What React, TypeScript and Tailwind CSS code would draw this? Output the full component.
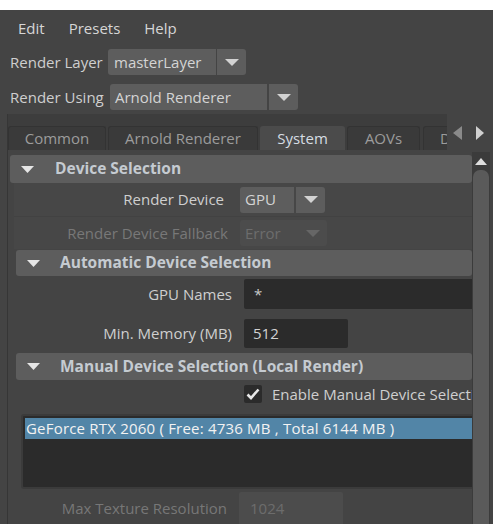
import React from "react";

const Down = ({ w = 14, h = 7, color = "#d2d2d2" }: { w?: number; h?: number; color?: string }) => (
  <svg width={w} height={h} viewBox={`0 0 ${w} ${h}`}>
    <path d={`M0 0 H${w} L${w / 2} ${h} Z`} fill={color} />
  </svg>
);

const Header = ({ title, h, tri, gap }: { title: string; h: string; tri: string; gap: string }) => (
  <div className={`${h} bg-[#5d5d5d] rounded-[3px] flex items-center`}>
    <div className={tri}>
      <Down w={13} h={7} color="#e6e6e6" />
    </div>
    <span className={`${gap} font-bold text-[15.5px] text-[#c5cbd1] whitespace-nowrap`}>{title}</span>
  </div>
);

export default function App() {
  return (
    <div className="w-[493px] h-[524px] overflow-hidden bg-[#444444] text-[#cfcfcf] text-[15px] leading-none flex flex-col font-['Open_Sans',sans-serif]">
      <div className="h-[10px] bg-white shrink-0" />
      {/* menu */}
      <div className="h-[36px] shrink-0 flex items-center pl-[18px] gap-[24px] text-[#d6d6d6]">
        <span>Edit</span>
        <span>Presets</span>
        <span>Help</span>
      </div>
      {/* Render Layer */}
      <div className="mt-[3px] h-[26px] shrink-0 flex items-center pl-[10px]">
        <span className="w-[98px] whitespace-nowrap">Render Layer</span>
        <div className="h-full w-[108px] bg-[#5d5d5d] rounded-l-[3px] flex items-center pl-[6px] text-[#d4d4d4]">masterLayer</div>
        <div className="h-full w-[29px] ml-[1px] bg-[#5d5d5d] rounded-r-[3px] flex items-center justify-center">
          <Down />
        </div>
      </div>
      {/* Render Using */}
      <div className="mt-[9px] h-[26px] shrink-0 flex items-center pl-[10px]">
        <span className="w-[100px] whitespace-nowrap">Render Using</span>
        <div className="h-full w-[157px] bg-[#5d5d5d] rounded-l-[3px] flex items-center pl-[5px] text-[#d4d4d4]">Arnold Renderer</div>
        <div className="h-full w-[29px] ml-[2px] bg-[#5d5d5d] rounded-r-[3px] flex items-center justify-center">
          <Down />
        </div>
      </div>
      {/* Tab widget */}
      <div className="mt-[4px] flex-1 min-h-0 ml-[7px] border-l border-[#363636] flex flex-col">
        <div className="h-[36px] shrink-0 flex">
          <div className="w-[439px] bg-[#3d3d3d] flex items-end overflow-hidden">
            <div className="w-[98px] h-[24px] shrink-0 bg-[#3a3a3a] border border-b-0 border-[#333333] rounded-t-[3px] flex items-center justify-center text-[#9c9c9c]">Common</div>
            <div className="w-[150px] h-[24px] shrink-0 ml-[2px] bg-[#3a3a3a] border border-b-0 border-[#333333] rounded-t-[3px] flex items-center justify-center text-[#9c9c9c]">Arnold Renderer</div>
            <div className="w-[85px] h-[24px] shrink-0 ml-[2px] bg-[#4b4b4b] rounded-t-[3px] flex items-center justify-center text-[#d6dde3]">System</div>
            <div className="w-[73px] h-[24px] shrink-0 ml-[2px] bg-[#3a3a3a] border border-b-0 border-[#333333] rounded-t-[3px] flex items-center justify-center text-[#9c9c9c]">AOVs</div>
            <div className="w-[60px] h-[24px] shrink-0 ml-[3px] bg-[#3a3a3a] border border-b-0 border-[#333333] rounded-t-[3px] flex items-center pl-[16px] text-[#9c9c9c] whitespace-nowrap">Diagnostics</div>
          </div>
          <div className="flex-1 bg-[#444444] flex items-center pt-[2px] pl-[6px] gap-[14px]">
            <svg width="9" height="14" viewBox="0 0 9 14">
              <path d="M9 0 V14 L0 7 Z" fill="#8a8a8a" />
            </svg>
            <svg width="8" height="14" viewBox="0 0 8 14">
              <path d="M0 0 V14 L8 7 Z" fill="#d0d0d0" />
            </svg>
          </div>
        </div>
        <div className="flex-1 min-h-0 flex">
          <div className="flex-1 min-w-0 overflow-hidden pl-[2px] pt-[5px]">
            <Header title="Device Selection" h="h-[28px]" tri="ml-[11px]" gap="ml-[21px]" />
            <div className="bg-[#474747] ml-[4px]">
              <div className="h-[33px] flex items-center">
                <span className="w-[210px] text-right whitespace-nowrap">Render Device</span>
                <div className="ml-[16px] h-[26px] w-[54px] bg-[#5d5d5d] rounded-l-[3px] flex items-center pl-[5px] text-[#d4d4d4]">GPU</div>
                <div className="ml-[2px] h-[26px] w-[29px] bg-[#5d5d5d] rounded-r-[3px] flex items-center justify-center">
                  <Down />
                </div>
              </div>
              <div className="h-[33px] flex items-center border-t border-[#424242]">
                <span className="w-[214px] text-right whitespace-nowrap text-[#787878]">Render Device Fallback</span>
                <div className="ml-[12px] h-[26px] w-[87px] bg-[#4c4c4c] rounded-[3px] flex items-center justify-between pl-[5px] pr-[7px] text-[#6c6c6c]">
                  <span>Error</span>
                  <Down color="#666666" />
                </div>
              </div>
            </div>
            <div className="ml-[6px] mt-[1px]">
              <Header title="Automatic Device Selection" h="h-[26px]" tri="ml-[11px]" gap="ml-[20px]" />
              <div className="mt-[3px] h-[30px] flex items-center">
                <span className="w-[216px] text-right whitespace-nowrap">GPU Names</span>
                <div className="ml-[12px] h-full flex-1 bg-[#2b2b2b] rounded-l-[2px] flex items-center pl-[10px] text-[#c8c8c8]">*</div>
              </div>
              <div className="mt-[10px] h-[29px] flex items-center">
                <span className="w-[216px] text-right whitespace-nowrap">Min. Memory (MB)</span>
                <div className="ml-[12px] h-full w-[104px] bg-[#2b2b2b] rounded-[2px] flex items-center pl-[9px] text-[#d2d2d2]">512</div>
              </div>
              <div className="mt-[5px]">
                <Header title="Manual Device Selection (Local Render)" h="h-[27px]" tri="ml-[11px]" gap="ml-[20px]" />
              </div>
              <div className="mt-[5px] h-[18px] flex items-center">
                <div className="ml-[228px] w-[18px] h-[18px] shrink-0 bg-[#2b2b2b] rounded-[2px] flex items-center justify-center">
                  <svg width="14" height="12" viewBox="0 0 14 12">
                    <path d="M1.5 6.5 L5 10 L12.5 1.5" stroke="#e8e8e8" strokeWidth="2.6" fill="none" />
                  </svg>
                </div>
                <span className="ml-[10px] whitespace-nowrap">Enable Manual Device Selection</span>
              </div>
              <div className="mt-[11px] ml-[5px] w-[470px] h-[75px] border-2 border-[#3b3b3b] rounded-[3px] bg-[#2b2b2b] p-[2px]">
                <div className="h-[21px] bg-[#5285a7] flex items-center pl-[1px] text-[#f2f2f2] whitespace-nowrap tracking-[0.2px]">
                  GeForce RTX 2060 ( Free: 4736 MB , Total 6144 MB )
                </div>
              </div>
              <div className="mt-[3px] h-[32px] flex items-center">
                <span className="w-[211px] text-right whitespace-nowrap text-[#777777]">Max Texture Resolution</span>
                <div className="ml-[12px] h-full w-[104px] bg-[#4c4c4c] rounded-t-[2px] flex items-center pl-[11px] text-[#6c6c6c]">1024</div>
              </div>
            </div>
          </div>
          <div className="w-[21px] shrink-0 pt-[2px] flex">
            <div className="w-[18px] bg-[#3b3b3b] flex flex-col">
              <div className="h-[18px] flex items-center justify-center">
                <svg width="12" height="7" viewBox="0 0 12 7">
                  <path d="M0 7 H12 L6 0 Z" fill="#dddddd" />
                </svg>
              </div>
              <div className="flex-1 mx-[1px] bg-[#5a5a5a] rounded-t-[7px]" />
            </div>
          </div>
        </div>
      </div>
    </div>
  );
}
